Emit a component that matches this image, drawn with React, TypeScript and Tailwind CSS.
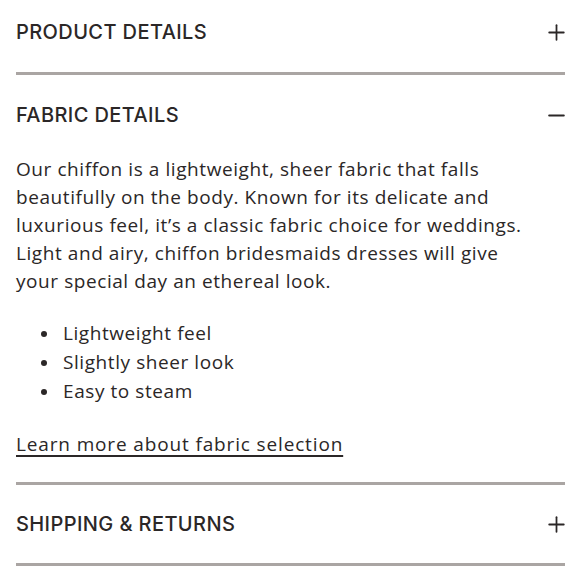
import { Plus, Minus } from "lucide-react";

const headingCls =
  "text-[20px] font-medium tracking-[0.02em] text-[#2b2727] [font-family:Inter,'Liberation_Sans',sans-serif]";

const Divider = () => <div className="h-[3px] w-full bg-[#aaa5a3]" />;

export default function App() {
  return (
    <div className="w-[580px] h-[580px] bg-white px-4 pr-[15px] text-[#2b2727] overflow-hidden">
      <div className="flex items-center justify-between pt-[17px] pb-[25px]">
        <h2 className={headingCls}>PRODUCT DETAILS</h2>
        <Plus className="w-[25px] h-[25px] mr-[-4px]" strokeWidth={1.7} />
      </div>
      <Divider />
      <div className="flex items-center justify-between pt-[25px] pb-[25px]">
        <h2 className={headingCls}>FABRIC DETAILS</h2>
        <Minus className="w-[25px] h-[25px] mr-[-4px]" strokeWidth={2} />
      </div>
      <div className="text-[19px] leading-[28px] tracking-[0.03em] [font-family:'Open_Sans',sans-serif] text-[#2b2727]">
        <p className="max-w-[520px]">
          Our chiffon is a lightweight, sheer fabric that falls beautifully on the body. Known for its
          delicate and luxurious feel, it’s a classic fabric choice for weddings. Light and airy,
          chiffon bridesmaids dresses will give your special day an ethereal look.
        </p>
        <ul className="mt-[24px] flex flex-col leading-[29px]">
          {["Lightweight feel", "Slightly sheer look", "Easy to steam"].map((t) => (
            <li key={t} className="flex items-center">
              <span className="ml-[25px] mr-[16px] w-[6px] h-[6px] rounded-full bg-[#2b2727]" />
              {t}
            </li>
          ))}
        </ul>
        <a href="#" className="mt-[24px] mb-[24px] inline-block tracking-[0.045em] underline underline-offset-[4px] decoration-[1.5px]">
          Learn more about fabric selection
        </a>
      </div>
      <Divider />
      <div className="flex items-center justify-between pt-[24px] pb-[24px]">
        <h2 className={headingCls}>SHIPPING &amp; RETURNS</h2>
        <Plus className="w-[25px] h-[25px] mr-[-4px]" strokeWidth={1.7} />
      </div>
      <Divider />
    </div>
  );
}
